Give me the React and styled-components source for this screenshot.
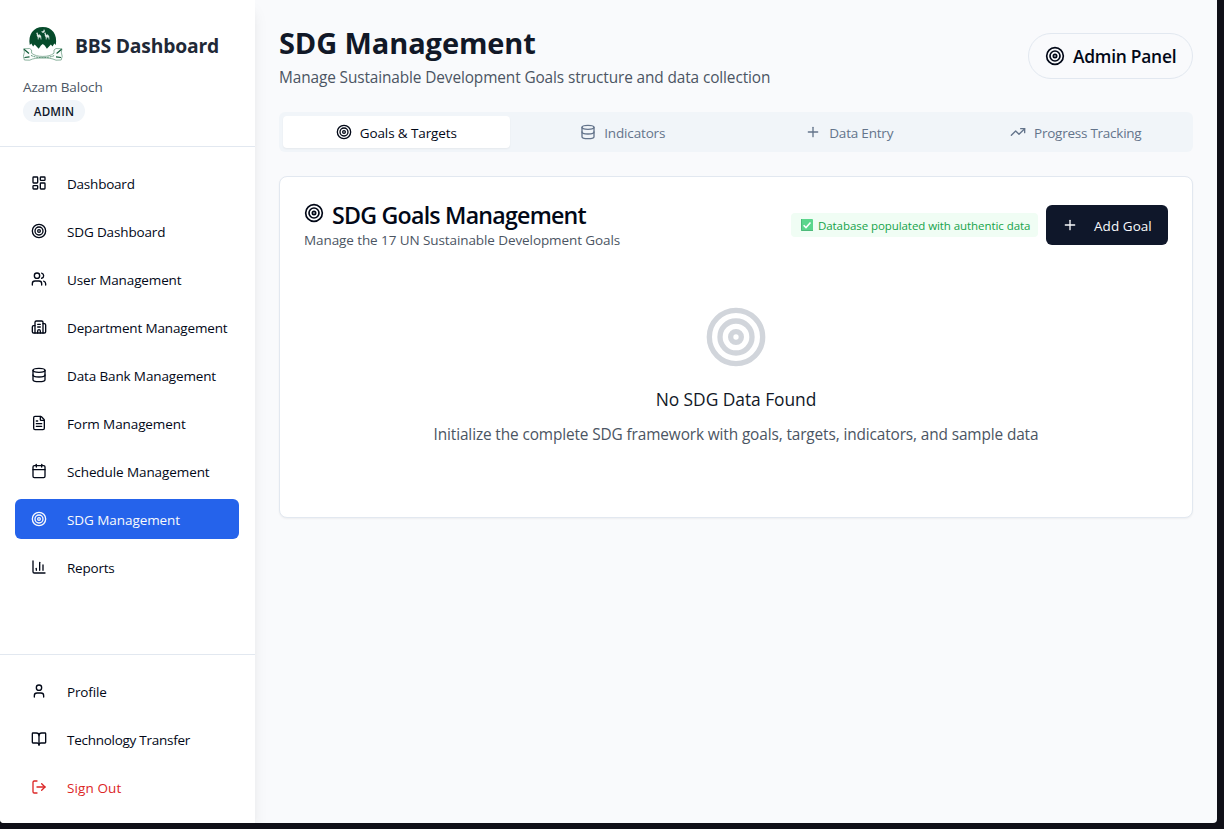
import React from 'react';
import styled, { createGlobalStyle } from 'styled-components';
import {
  LayoutDashboard, Target, Users, Building2, Database, FileText, Calendar,
  ChartColumn, User, BookOpen, LogOut, Plus, TrendingUp,
} from 'lucide-react';

const GlobalStyle = createGlobalStyle`
  *, *::before, *::after { box-sizing: border-box; }
  body {
    margin: 0;
    background: #0f0f17;
    font-family: "Segoe UI", "Open Sans", "Noto Sans", sans-serif;
    color: #020817;
    overflow: hidden;
  }
  h1, h2, h3, p { margin: 0; }
  button { font: inherit; border: 0; margin: 0; cursor: pointer; }
  svg { flex: none; display: block; }
`;

const Window = styled.div`
  display: flex;
  width: 1217px;
  height: 823px;
  background: #f9fafc;
  border-radius: 0 0 4px 4px;
  overflow: hidden;
`;

const Text = styled.span`
  display: block;
  padding-top: ${(p) => p.$drop ?? 1}px;
  white-space: nowrap;
  letter-spacing: ${(p) => p.$track || 0}px;
`;

const Sidebar = styled.aside`
  display: flex;
  flex-direction: column;
  width: 255px;
  flex: none;
  background: #fff;
  box-shadow: 0 10px 15px -3px rgba(0, 0, 0, 0.1), 0 4px 6px -4px rgba(0, 0, 0, 0.1);
`;

const SidebarHeader = styled.header`
  height: 147px;
  padding: 24px 23px 0;
  border-bottom: 1px solid #e2e8f0;
`;

const Brand = styled.div`
  display: flex;
  align-items: center;
  gap: 12px;
  height: 40px;
`;

const BrandName = styled.h1`
  padding-top: 3px;
  font-size: 19.3px;
  line-height: 28px;
  font-weight: 700;
  letter-spacing: -0.19px;
  color: #1f2937;
  white-space: nowrap;
`;

const UserName = styled.p`
  margin-top: 13px;
  font-size: 13.5px;
  line-height: 20px;
  letter-spacing: -0.12px;
  color: #4b5563;
`;

const RoleBadge = styled.div`
  display: flex;
  align-items: center;
  justify-content: center;
  width: 62px;
  height: 22px;
  margin-top: 3px;
  border-radius: 11px;
  background: #f1f5f9;
  color: #0f172a;
  font-size: 11.6px;
  line-height: 16px;
  font-weight: 600;
`;

const Nav = styled.nav`
  display: flex;
  flex-direction: column;
  gap: 8px;
  padding: 16px 16px 16px 15px;
  flex: ${(p) => (p.$grow ? '1' : 'none')};
  border-top: ${(p) => (p.$divided ? '1px solid #e2e8f0' : '0')};
`;

const NavItem = styled.button`
  display: flex;
  align-items: center;
  gap: 20px;
  height: 40px;
  padding: 0 16px;
  border-radius: 6px;
  background: ${(p) => (p.$active ? '#2563eb' : 'transparent')};
  color: ${(p) => (p.$active ? '#f8fafc' : p.$danger ? '#dc2626' : '#020817')};
  font-size: 13.5px;
  line-height: 20px;
`;

const Main = styled.main`
  display: flex;
  flex-direction: column;
  flex: 1;
  gap: 24px;
  padding: 24px;
`;

const PageHeader = styled.header`
  display: flex;
  align-items: center;
  justify-content: space-between;
  height: 64px;
`;

const PageTitle = styled.h2`
  font-size: 29px;
  line-height: 38px;
  font-weight: 700;
  letter-spacing: -0.1px;
  color: #111827;
`;

const PageSubtitle = styled.p`
  padding-top: 6px;
  font-size: 15.4px;
  line-height: 20px;
  letter-spacing: -0.115px;
  color: #4b5563;
`;

const PanelBadge = styled.div`
  display: flex;
  align-items: center;
  gap: 8px;
  width: 165px;
  height: 46px;
  padding: 0 16px;
  border: 1px solid #e2e8f0;
  border-radius: 23px;
  font-size: 17.4px;
  line-height: 28px;
  font-weight: 600;
`;

const Tabs = styled.div`
  display: grid;
  grid-template-columns: repeat(4, 1fr);
  height: 40px;
  padding: 4px;
  border-radius: 6px;
  background: #f1f5f9;
`;

const Tab = styled.button`
  display: flex;
  align-items: center;
  justify-content: center;
  gap: 8px;
  padding: 0;
  border-radius: 4px;
  font-size: 13.5px;
  line-height: 20px;
  background: ${(p) => (p.$active ? '#fff' : 'transparent')};
  color: ${(p) => (p.$active ? '#020817' : '#64748b')};
  box-shadow: ${(p) => (p.$active ? '0 1px 2px rgba(0, 0, 0, 0.05)' : 'none')};
`;

const Card = styled.section`
  height: 342px;
  padding: 24px;
  border: 1px solid #e2e8f0;
  border-radius: 8px;
  background: #fff;
  box-shadow: 0 1px 2px rgba(0, 0, 0, 0.05);
`;

const CardHeader = styled.header`
  display: flex;
  align-items: center;
  justify-content: space-between;
  height: 48px;
`;

const CardTitle = styled.h3`
  display: flex;
  align-items: center;
  gap: 8px;
  height: 24px;
  font-size: 23.2px;
  line-height: 24px;
  font-weight: 600;
`;

const CardDescription = styled.p`
  padding-top: 5px;
  font-size: 13.5px;
  line-height: 20px;
  letter-spacing: -0.09px;
  color: #4b5563;
`;

const CardHeading = styled.div`
  height: 48px;
`;

const Actions = styled.div`
  display: flex;
  align-items: center;
  gap: 8px;
`;

const StatusNote = styled.div`
  display: flex;
  align-items: center;
  gap: 5px;
  width: 247px;
  height: 24px;
  padding-left: 10px;
  border-radius: 4px;
  background: #f0fdf4;
  color: #16a34a;
  font-size: 11.5px;
  line-height: 16px;
`;

const PrimaryButton = styled.button`
  display: flex;
  align-items: center;
  gap: 16px;
  width: 122px;
  height: 40px;
  padding: 0 16px;
  border-radius: 6px;
  background: #0f172a;
  color: #f8fafc;
  font-size: 13.5px;
  line-height: 20px;
`;

const EmptyState = styled.div`
  display: flex;
  flex-direction: column;
  align-items: center;
  padding-top: 56px;
  color: #d1d5db;
`;

const EmptyTitle = styled.h3`
  margin-top: 16px;
  font-size: 17.4px;
  line-height: 28px;
  font-weight: 400;
  letter-spacing: -0.05px;
  color: #111827;
`;

const EmptyText = styled.p`
  margin-top: 10px;
  font-size: 15.4px;
  line-height: 24px;
  letter-spacing: -0.125px;
  color: #4b5563;
`;

function Camel({ x }) {
  return (
    <g transform={`translate(${x} 8.5)`} fill="#dbe9e1">
      <path d="M0 .6L1.600 0l.6 2.600 1-.9 1.100.9.9 1.200.2 3.200h-.7l-.3-2-.9.1H2.700L2.500 7h-.7l-.1-2.300L.8 3.300l0-1.900z" />
    </g>
  );
}

function Crest() {
  return (
    <svg width="40" height="40" viewBox="0 0 40 40" fill="none">
      <path
        d="M6.800 21C4.800 10.500 10.500 3 19.800 3s15 7.500 13 18l-1.500-1.500-1.800 3-1.600-2-4 4.300-2.200-3.200-1.900-1.600-1.900 1.600-2.200 3.200-4-4.300-1.600 2-1.800-3z"
        fill="#064b2b"
      />
      <path d="M20.800 5.200a1.900 1.900 0 1 1-2.700 2.100 2 2 0 0 0 2.700-2.100z" fill="#dbe9e1" />
      <Camel x={13} />
      <Camel x={21} />
      <g stroke="#5e9479" strokeWidth=".7">
        <path d="M.6 24.800l6-.3 2 1.500v3.200c3 2.400 6.500 3.200 11.200 3.200s8.200-.8 11.200-3.200V26l2-1.500 6 .3-.7 3.300.9 4.200-1 3.700-5.200.2c-4-2-8-2.200-13.200-2.200s-9.200.2-13.200 2.200l-5.200-.2-1-3.700 1-4.200z" fill="#fbfdfc" />
        <path d="M1 25.300l5 4.200M38.600 25.300l-5 4.200M1.500 33.500l5-.6M38 33.500l-5-.6" stroke="#0f5a36" strokeWidth="1.200" />
        <path d="M8 31.400c3.200 1.600 7 2.200 11.800 2.200s8.600-.6 11.800-2.200" stroke="#3f8060" strokeDasharray="2 .7" strokeWidth=".8" />
      </g>
    </svg>
  );
}

function CheckMark() {
  return (
    <svg width="12" height="12" viewBox="0 0 12 12" fill="none">
      <rect width="12" height="12" rx="1" fill="#5bd68c" />
      <path d="M.5 0v11.500H12" stroke="#4dba7a" />
      <path d="M2.600 6.200l2.400 2.400 4.500-5" stroke="#fff" strokeWidth="1.500" />
    </svg>
  );
}

const mainLinks = [
  { icon: LayoutDashboard, label: 'Dashboard', track: -0.22 },
  { icon: Target, label: 'SDG Dashboard', track: -0.14 },
  { icon: Users, label: 'User Management', track: -0.13 },
  { icon: Building2, label: 'Department Management', track: -0.15 },
  { icon: Database, label: 'Data Bank Management', track: -0.135 },
  { icon: FileText, label: 'Form Management', track: -0.1 },
  { icon: Calendar, label: 'Schedule Management', track: -0.09 },
  { icon: Target, label: 'SDG Management', track: -0.07, active: true },
  { icon: ChartColumn, label: 'Reports', track: -0.22 },
];

const accountLinks = [
  { icon: User, label: 'Profile', track: -0.15 },
  { icon: BookOpen, label: 'Technology Transfer', track: -0.27 },
  { icon: LogOut, label: 'Sign Out', track: 0.1, danger: true },
];

const tabs = [
  { icon: Target, label: 'Goals & Targets', track: -0.12, active: true },
  { icon: Database, label: 'Indicators', track: -0.15 },
  { icon: Plus, label: 'Data Entry', track: -0.2 },
  { icon: TrendingUp, label: 'Progress Tracking', track: -0.25 },
];

const renderLink = ({ icon: Icon, label, track, active, danger }) => (
  <NavItem key={label} $active={active} $danger={danger}>
    <Icon size={16} />
    <Text $track={track}>{label}</Text>
  </NavItem>
);

export default function App() {
  return (
    <>
      <GlobalStyle />
      <Window>
        <Sidebar>
          <SidebarHeader>
            <Brand>
              <Crest />
              <BrandName>BBS Dashboard</BrandName>
            </Brand>
            <UserName>Azam Baloch</UserName>
            <RoleBadge><Text $track={0.2}>ADMIN</Text></RoleBadge>
          </SidebarHeader>
          <Nav $grow>{mainLinks.map(renderLink)}</Nav>
          <Nav $divided>{accountLinks.map(renderLink)}</Nav>
        </Sidebar>
        <Main>
          <PageHeader>
            <div>
              <PageTitle>SDG Management</PageTitle>
              <PageSubtitle>Manage Sustainable Development Goals structure and data collection</PageSubtitle>
            </div>
            <PanelBadge>
              <Target size={20} />
              <Text $track={-0.25} $drop={0}>Admin Panel</Text>
            </PanelBadge>
          </PageHeader>
          <Tabs>
            {tabs.map(({ icon: Icon, label, track, active }) => (
              <Tab key={label} $active={active}>
                <Icon size={16} />
                <Text $track={track}>{label}</Text>
              </Tab>
            ))}
          </Tabs>
          <Card>
            <CardHeader>
              <CardHeading>
                <CardTitle>
                  <Target size={20} />
                  <Text $track={-0.77} $drop={3}>SDG Goals Management</Text>
                </CardTitle>
                <CardDescription>Manage the 17 UN Sustainable Development Goals</CardDescription>
              </CardHeading>
              <Actions>
                <StatusNote>
                  <CheckMark />
                  <Text $track={-0.07}>Database populated with authentic data</Text>
                </StatusNote>
                <PrimaryButton>
                  <Plus size={16} />
                  <Text $track={0.05}>Add Goal</Text>
                </PrimaryButton>
              </Actions>
            </CardHeader>
            <EmptyState>
              <Target size={64} />
              <EmptyTitle>No SDG Data Found</EmptyTitle>
              <EmptyText>
                Initialize the complete SDG framework with goals, targets, indicators, and sample data
              </EmptyText>
            </EmptyState>
          </Card>
        </Main>
      </Window>
    </>
  );
}
